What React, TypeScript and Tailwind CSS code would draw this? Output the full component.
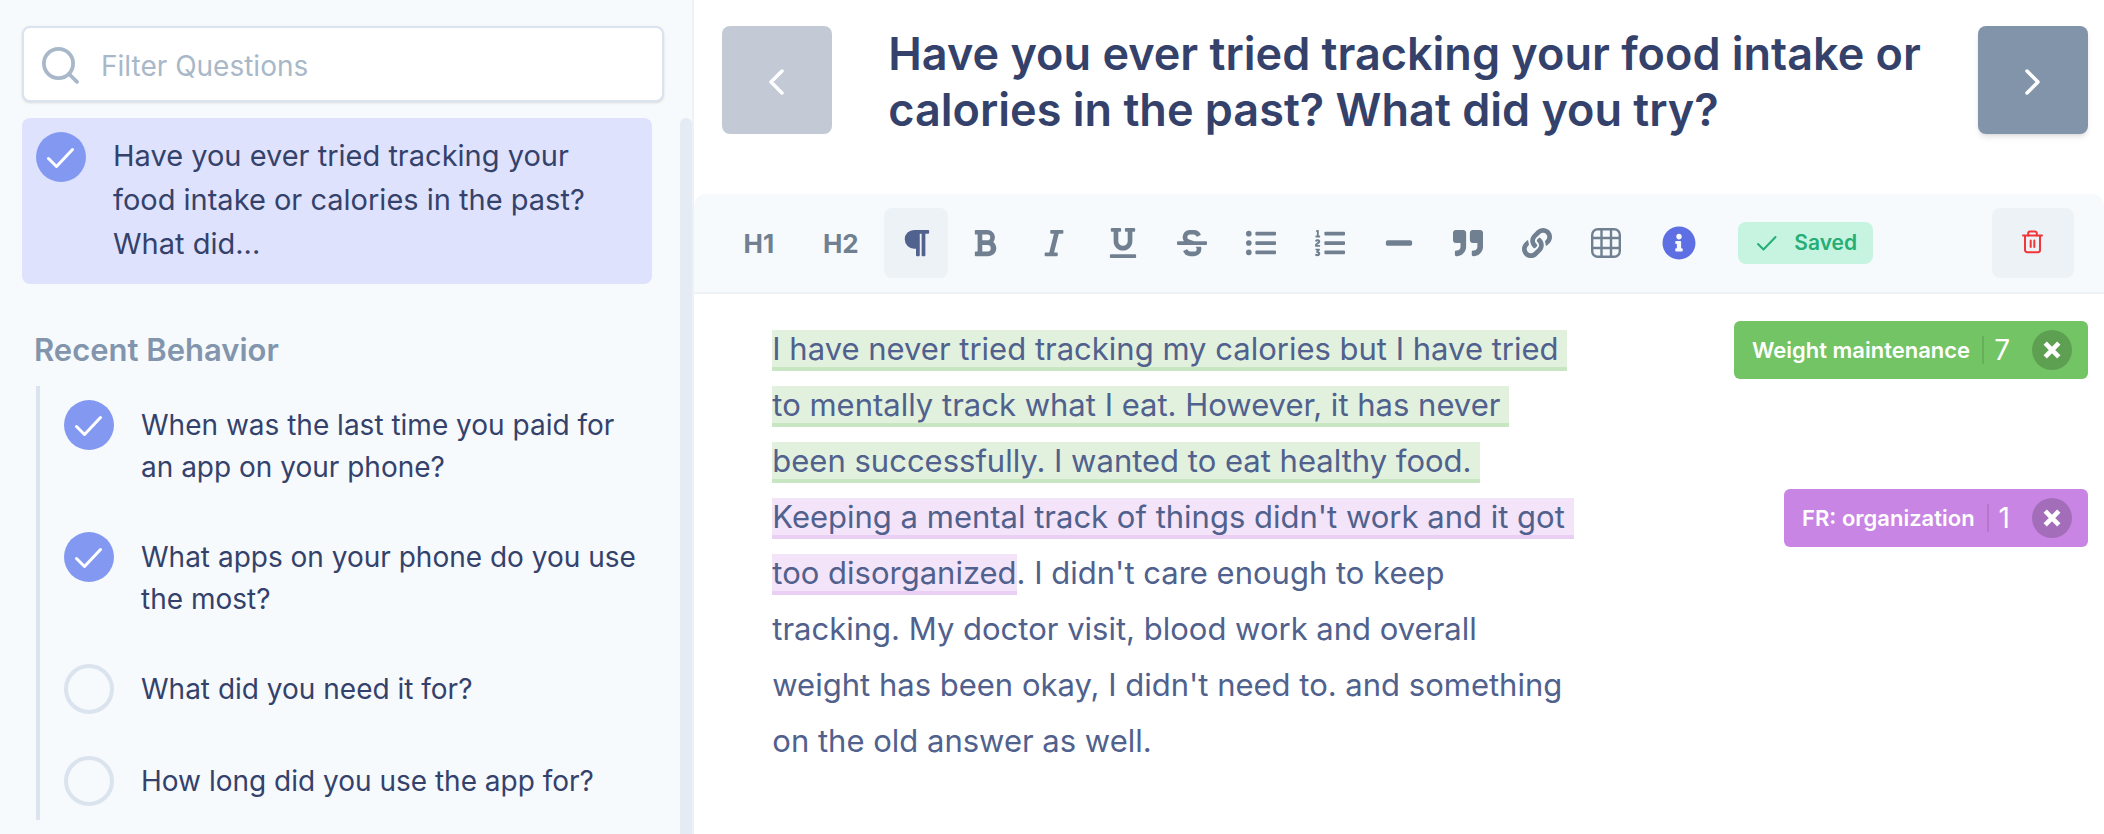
import { useState } from 'react';
import {
  FaBold,
  FaInfoCircle,
  FaItalic,
  FaLink,
  FaListOl,
  FaListUl,
  FaMinus,
  FaParagraph,
  FaQuoteRight,
  FaStrikethrough,
  FaUnderline,
} from 'react-icons/fa';

type Question = { id: number; text: string; done: boolean };

const questions: Question[] = [
  { id: 1, text: 'When was the last time you paid for an app on your phone?', done: true },
  { id: 2, text: 'What apps on your phone do you use the most?', done: true },
  { id: 3, text: 'What did you need it for?', done: false },
  { id: 4, text: 'How long did you use the app for?', done: false },
];

function TableIcon() {
  return (
    <svg width="30" height="30" viewBox="0 0 30 30" fill="none" stroke="currentColor" strokeWidth="2.4">
      <rect x="1.2" y="1.2" width="27.6" height="27.6" rx="5.5" />
      <path d="M10.5 1v28M20 1v28M1 10h28M1 20h28" />
    </svg>
  );
}

function TrashIcon() {
  return (
    <svg width="24" height="26" viewBox="0 0 24 26" fill="none" stroke="currentColor" strokeWidth="2" strokeLinecap="round" strokeLinejoin="round">
      <path d="M2 5.5h19M4 5.5V20a2.2 2.2 0 0 0 2.2 2.2h10.6A2.2 2.2 0 0 0 19 20V5.5" />
      <path d="M7.2 5.5V3.3A1.8 1.8 0 0 1 9 1.5h5a1.8 1.8 0 0 1 1.8 1.8v2.2M9.7 10.5V17M13.3 10.5V17" />
    </svg>
  );
}

const tools = [
  { label: 'Paragraph', icon: <FaParagraph size={30} /> },
  { label: 'Bold', icon: <FaBold size={30} /> },
  { label: 'Italic', icon: <FaItalic size={30} /> },
  { label: 'Underline', icon: <FaUnderline size={30} /> },
  { label: 'Strikethrough', icon: <FaStrikethrough size={30} /> },
  { label: 'Bullet list', icon: <FaListUl size={30} /> },
  { label: 'Numbered list', icon: <FaListOl size={30} /> },
  { label: 'Divider', icon: <FaMinus size={30} /> },
  { label: 'Quote', icon: <FaQuoteRight size={30} /> },
  { label: 'Link', icon: <FaLink size={30} /> },
  { label: 'Table', icon: <TableIcon /> },
];

function StatusCircle({ done }: { done: boolean }) {
  if (!done) {
    return <span className="size-[50px] shrink-0 rounded-full border-4 border-[#dbe3ee]" />;
  }
  return (
    <span className="flex size-[50px] shrink-0 items-center justify-center rounded-full bg-[#8399f1] text-white">
      <svg width="28" height="22" viewBox="0 0 28 22" fill="none" stroke="currentColor" strokeWidth="3" strokeLinecap="round" strokeLinejoin="round">
        <path d="M1.5 12.5l8 8 16-17" />
      </svg>
    </span>
  );
}

function Tag({ label, count, color }: { label: string; count: number; color: string }) {
  return (
    <div className={`flex h-[58px] items-center rounded-md pr-4 pl-[18px] text-white ${color}`}>
      <span className="text-[22px] font-semibold">{label}</span>
      <span className="ml-3 h-7 w-0.5 bg-black/10" />
      <span className="ml-2.5 text-[28px]">{count}</span>
      <button aria-label={`Remove ${label}`} className="ml-[22px] flex size-10 items-center justify-center rounded-full bg-black/18">
        <svg width="18" height="18" viewBox="0 0 18 18" stroke="currentColor" strokeWidth="4.6">
          <path d="M2.2 2.2l13.6 13.6M15.8 2.2L2.2 15.8" />
        </svg>
      </button>
    </div>
  );
}

function Sidebar() {
  const [filter, setFilter] = useState('');
  const visible = questions.filter((q) => q.text.toLowerCase().includes(filter.toLowerCase()));

  return (
    <aside className="flex w-[33%] shrink-0 flex-col border-r-2 border-[#edf2f7] bg-[#f6fafd] pt-[26px] pl-[22px]">
      <label className="mr-7 flex h-[76px] items-center rounded-lg border-2 border-[#dbe3ee] bg-white pl-[18px] shadow-sm">
        <svg width="38" height="40" viewBox="0 0 38 40" className="shrink-0" fill="none" stroke="#a9b8c8" strokeWidth="3.8" strokeLinecap="round">
          <circle cx="16.5" cy="19.5" r="14.6" />
          <path d="M27 30l8 7.8" />
        </svg>
        <input
          type="text"
          aria-label="Filter Questions"
          placeholder="Filter Questions"
          value={filter}
          onChange={(e) => setFilter(e.target.value)}
          className="ml-[21px] w-full bg-transparent pt-1 text-[28px] outline-none placeholder:text-[#a9b8c8]"
        />
      </label>

      <div className="mt-4 flex grow">
        <div className="grow text-[#34426b]">
          <a href="#current" className="flex gap-[27px] rounded-lg bg-[#dfe2fd] p-3.5">
            <StatusCircle done />
            <span className="pt-0.5 pb-1 text-[29px] leading-[44px]">
              Have you ever tried tracking your food intake or calories in the past? What did...
            </span>
          </a>
          <h2 className="mt-11 ml-3 text-[31px] leading-[44px] font-semibold text-[#8295ac]">Recent Behavior</h2>
          <ul className="mt-3.5 ml-3.5 flex flex-col gap-[42px] border-l-4 border-[#dbe3ee] py-3.5 pl-6">
            {visible.map((q) => (
              <li key={q.id}>
                <a href={`#question-${q.id}`} className="flex gap-[27px]">
                  <StatusCircle done={q.done} />
                  <span className="pt-1 pb-0.5 text-[28px] leading-[42px]">{q.text}</span>
                </a>
              </li>
            ))}
          </ul>
        </div>
        <div className="ml-7 w-3 shrink-0 rounded-t-md bg-[#e5ebf5]" />
      </div>
    </aside>
  );
}

function Toolbar() {
  const [active, setActive] = useState('Paragraph');

  return (
    <div className="flex h-[100px] items-center gap-[5px] rounded-t-xl border-b-2 border-[#edf2f7] bg-[#f6fafd] pr-[30px] pl-[26px] text-[#718091]">
      <button className="h-[70px] w-[77px] text-[26px] font-bold">H1</button>
      <button className="h-[70px] w-[77px] text-[26px] font-bold">H2</button>
      {tools.map((tool) => (
        <button
          key={tool.label}
          aria-label={tool.label}
          onClick={() => setActive(tool.label)}
          className={`flex h-[70px] w-16 items-center justify-center rounded-lg ${
            active === tool.label ? 'bg-[#edf2f7] text-[#52628f]' : ''
          }`}
        >
          {tool.icon}
        </button>
      ))}
      <button aria-label="Info" className="flex h-[70px] w-[72px] items-center justify-center text-[#5d6fe3]">
        <FaInfoCircle size={34} />
      </button>
      <div className="ml-[18px] flex h-[42px] items-center gap-4 rounded-lg bg-[#c6f4e0] px-4 text-[#25ae76]">
        <svg width="24" height="24" viewBox="0 0 24 24" fill="none" stroke="currentColor" strokeWidth="2" strokeLinecap="round" strokeLinejoin="round">
          <path d="M4 13l5.5 5.5L21.5 6" />
        </svg>
        <span className="text-[21px] font-semibold">Saved</span>
      </div>
      <button aria-label="Delete answer" className="ml-auto flex h-[70px] w-[82px] items-center justify-center rounded-lg bg-[#edf2f7] text-[#f0353b]">
        <TrashIcon />
      </button>
    </div>
  );
}

export default function App() {
  return (
    <div className="flex min-h-screen bg-white font-[Inter,sans-serif]">
      <Sidebar />
      <main className="flex min-w-0 grow flex-col">
        <header className="flex items-start pt-[26px] pr-4 pb-[60px] pl-7">
          <button aria-label="Previous question" className="flex h-[108px] w-[110px] shrink-0 items-center justify-center rounded-lg bg-[#c3cad6] text-white">
            <svg width="16" height="32" viewBox="0 0 16 32" fill="none" stroke="currentColor" strokeWidth="3.5" strokeLinecap="round" strokeLinejoin="round">
              <path d="M13 7L2 18l11 11" />
            </svg>
          </button>
          <h1 className="mx-14 -mb-1 grow text-[45px] leading-[56px] font-semibold text-[#34426b]">
            Have you ever tried tracking your food intake or calories in the past? What did you try?
          </h1>
          <button aria-label="Next question" className="flex h-[108px] w-[110px] shrink-0 items-center justify-center rounded-lg bg-[#8294aa] text-white shadow-md">
            <svg width="16" height="32" viewBox="0 0 16 32" fill="none" stroke="currentColor" strokeWidth="3.5" strokeLinecap="round" strokeLinejoin="round">
              <path d="M2 7l11 11L2 29" />
            </svg>
          </button>
        </header>
        <Toolbar />
        <div className="flex items-start justify-between pt-[27px] pr-4 pl-[78px]">
          <p className="w-[807px] text-[31px] leading-[56px] whitespace-break-spaces text-[#50618d]">
            <mark className="border-b-4 border-[#c9e6c2] bg-[#e2f0de] text-inherit">
              {'I have never tried tracking my calories but I have tried to mentally track what I eat. However, it has never been successfully. I wanted to eat healthy food. '}
            </mark>
            <mark className="border-b-4 border-[#e8cff3] bg-[#f3e4f9] text-inherit">
              {'Keeping a mental track of things didn\'t work and it got too disorganized'}
            </mark>
            {'. I didn\'t care enough to keep tracking. My doctor visit, blood work and overall weight has been okay, I didn\'t need to. and something on the old answer as well.'}
          </p>
          <div className="flex flex-col items-end gap-[110px]">
            <Tag label="Weight maintenance" count={7} color="bg-[#73c464]" />
            <Tag label="FR: organization" count={1} color="bg-[#c885e3]" />
          </div>
        </div>
      </main>
    </div>
  );
}
